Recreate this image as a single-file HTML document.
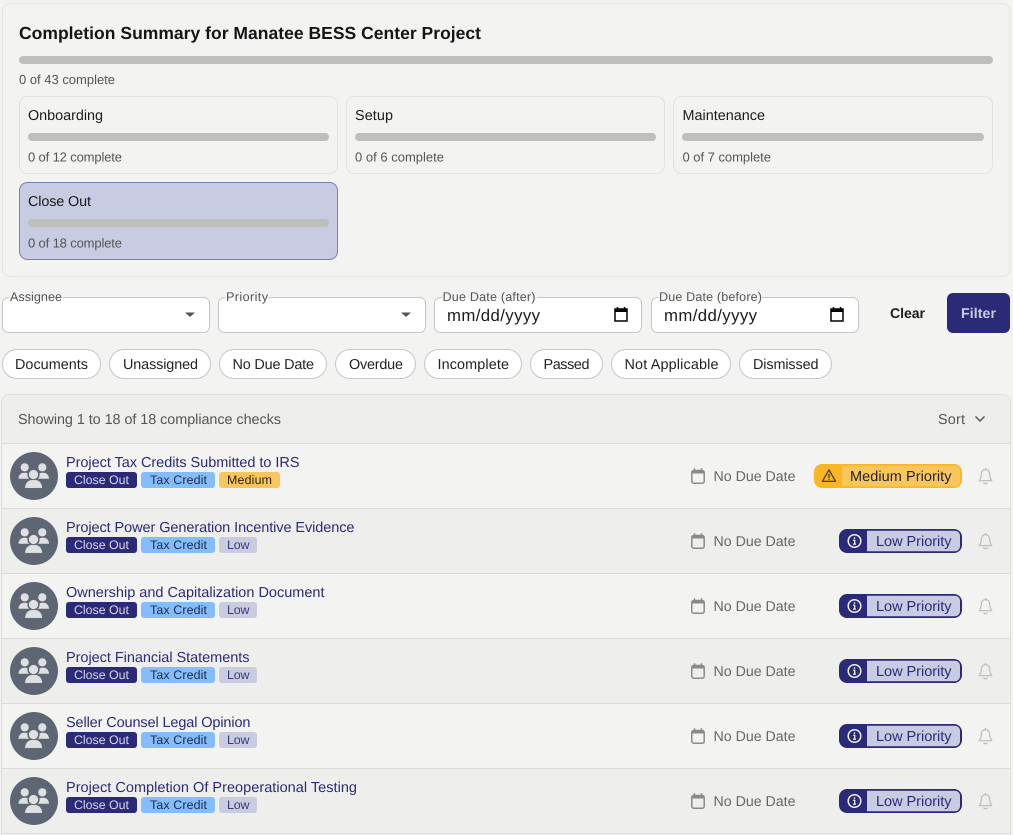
<!DOCTYPE html>
<html lang="en">
<head>
<meta charset="utf-8">
<title>Completion Summary</title>
<style>
html,body{margin:0;padding:0;background:#f3f3f2;width:1013px;height:835px;overflow:hidden}
svg{display:block}
text{font-family:"Liberation Sans",sans-serif;font-size:14.4px;text-rendering:geometricPrecision}
.title{font-size:17.5px;font-weight:700;fill:#151515}
.btn{font-size:14.1px;font-weight:700}
.sub{font-size:13px;fill:#555}
.card{font-size:14.4px;fill:#1a1a1a}
.lab{font-size:12.6px;fill:#555}
.date{font-size:16.8px;fill:#1a1a1a}
.chip{font-size:14.4px;fill:#222}
.t{font-size:14.5px;fill:#2b2a77}
.tag{font-size:12.4px}
.due{font-size:14.2px;fill:#666}
.pri{font-size:14.5px}
</style>
</head>
<body>
<svg width="1013" height="835" viewBox="0 0 1013 835" xmlns="http://www.w3.org/2000/svg">
<defs>
<symbol id="av" width="48" height="48" viewBox="0 0 48 48">
<circle cx="24" cy="24" r="24" fill="#5f6673"/>
<circle cx="14.700" cy="15.300" r="4.100" fill="#dfe0e2"/>
<circle cx="32.300" cy="15.300" r="4.100" fill="#dfe0e2"/>
<path d="M8.500 26.800c0-3.700 2.600-6.100 5.500-6.100h1.500c2.900 0 5 2.400 5 6.100z" fill="#dfe0e2"/>
<path d="M39 26.800c0-3.700-2.600-6.100-5.500-6.100H32c-2.900 0-5 2.400-5 6.100z" fill="#dfe0e2"/>
<circle cx="23.500" cy="22.500" r="5.400" fill="#dfe0e2" stroke="#5f6673" stroke-width="1.500"/>
<path d="M14.800 36.200c0-4.900 3.500-8.400 7-8.400h3.600c3.500 0 7 3.500 7 8.400z" fill="#dfe0e2" stroke="#5f6673" stroke-width="0.500"/>
</symbol>
<symbol id="cal" width="14" height="16" viewBox="0 0 14 16">
<path d="M3.500 0.300v2.700M10.500 0.300v2.700" stroke="#8a8a8a" stroke-width="1.500" fill="none"/>
<rect x="0.800" y="2.500" width="12.400" height="12.700" rx="2" fill="none" stroke="#8a8a8a" stroke-width="1.500"/>
<path d="M1 5.500V3.500a1 1 0 0 1 1-1h10a1 1 0 0 1 1 1v2z" fill="#8a8a8a"/>
</symbol>
<symbol id="bell" width="14" height="17" viewBox="0 0 14 17">
<path d="M7 1.600C4 1.600 2.800 3.900 2.800 6.500c0 2.900-.9 4.500-2.100 6.100h12.600c-1.200-1.600-2.100-3.200-2.100-6.100 0-2.600-1.200-4.900-4.200-4.900z" fill="none" stroke="#c0c0c0" stroke-width="1.300" stroke-linejoin="round"/>
<path d="M7 .5v1.200M5.300 15c.5.900 3 .9 3.400 0" fill="none" stroke="#c0c0c0" stroke-width="1.300" stroke-linecap="round"/>
</symbol>
<symbol id="dcal" width="14" height="15" viewBox="0 0 14 15">
<path d="M3.500 0v2.500M10.500 0v2.500" stroke="#000" stroke-width="1.500"/>
<rect x="1" y="2" width="12" height="12" fill="none" stroke="#000" stroke-width="1.500"/>
<rect x="1" y="2" width="12" height="3" fill="#000"/>
</symbol>
</defs>

<rect width="1013" height="835" fill="#f3f3f2"/>

<!-- Summary panel -->
<rect x="2.500" y="3.500" width="1007.500" height="273" rx="8" fill="#f3f3f2" stroke="#e3e3e6"/>
<text x="19" y="39" class="title" textLength="462">Completion Summary for Manatee BESS Center Project</text>
<rect x="19" y="56" width="974" height="8" rx="4" fill="#bebebc"/>
<text x="19" y="84" class="sub" textLength="96">0 of 43 complete</text>

<rect x="19.500" y="96.500" width="318" height="77" rx="8" fill="#f3f3f2" stroke="#e3e3e6"/>
<text x="28" y="120" class="card" textLength="75">Onboarding</text>
<rect x="28" y="133" width="301" height="8" rx="4" fill="#bebebc"/>
<text x="28" y="161.500" class="sub" textLength="94">0 of 12 complete</text>

<rect x="346.500" y="96.500" width="318" height="77" rx="8" fill="#f3f3f2" stroke="#e3e3e6"/>
<text x="355" y="120" class="card" textLength="38">Setup</text>
<rect x="355" y="133" width="301" height="8" rx="4" fill="#bebebc"/>
<text x="355" y="161.500" class="sub" textLength="89">0 of 6 complete</text>

<rect x="673.500" y="96.500" width="319" height="77" rx="8" fill="#f3f3f2" stroke="#e3e3e6"/>
<text x="682.500" y="120" class="card" textLength="82.500">Maintenance</text>
<rect x="682" y="133" width="302" height="8" rx="4" fill="#bebebc"/>
<text x="682.500" y="161.500" class="sub" textLength="88.500">0 of 7 complete</text>

<rect x="19.500" y="182.500" width="318" height="77" rx="8" fill="#c9cbe3" stroke="#7c7eb8"/>
<text x="28" y="206" class="card" textLength="63">Close Out</text>
<rect x="28" y="219" width="301" height="8" rx="4" fill="#bebebc"/>
<text x="28" y="247.500" class="sub" textLength="94">0 of 18 complete</text>

<!-- Filters -->
<g fill="#fff" stroke="#c6c6c6">
<rect x="2.500" y="297.500" width="207" height="35" rx="6"/>
<rect x="218.500" y="297.500" width="207" height="35" rx="6"/>
<rect x="434.500" y="297.500" width="207" height="35" rx="6"/>
<rect x="651.500" y="297.500" width="207" height="35" rx="6"/>
</g>
<g fill="#f3f3f2">
<rect x="9" y="296" width="54" height="3"/>
<rect x="225" y="296" width="44" height="3"/>
<rect x="442" y="296" width="95" height="3"/>
<rect x="658" y="296" width="104" height="3"/>
</g>
<text x="10" y="301" class="lab" textLength="52">Assignee</text>
<text x="226" y="301" class="lab" textLength="42">Priority</text>
<text x="442.500" y="301" class="lab" textLength="93">Due Date (after)</text>
<text x="659" y="301" class="lab" textLength="103">Due Date (before)</text>
<path d="M185 312.500h10l-5 4.500z" fill="#555"/>
<path d="M401 312.500h10l-5 4.500z" fill="#555"/>
<text x="447" y="321" class="date" textLength="93">mm/dd/yyyy</text>
<text x="664" y="321" class="date" textLength="93">mm/dd/yyyy</text>
<use href="#dcal" x="614" y="307"/>
<use href="#dcal" x="830" y="307"/>
<text x="890" y="318" class="btn" fill="#1e1e1e" textLength="35">Clear</text>
<rect x="947" y="293" width="63" height="40" rx="6" fill="#2b2a77"/>
<text x="961" y="318" class="btn" fill="#c9cbe3" textLength="35">Filter</text>

<!-- Chips -->
<g fill="#fff" stroke="#c6c6c6">
<rect x="2.500" y="349.500" width="98" height="29" rx="14.500"/>
<rect x="109.500" y="349.500" width="101" height="29" rx="14.500"/>
<rect x="219.500" y="349.500" width="107" height="29" rx="14.500"/>
<rect x="335.500" y="349.500" width="80" height="29" rx="14.500"/>
<rect x="424.500" y="349.500" width="97" height="29" rx="14.500"/>
<rect x="530.500" y="349.500" width="72" height="29" rx="14.500"/>
<rect x="611.500" y="349.500" width="119" height="29" rx="14.500"/>
<rect x="739.500" y="349.500" width="92" height="29" rx="14.500"/>
</g>
<text x="15" y="369" class="chip" textLength="73">Documents</text>
<text x="123" y="369" class="chip" textLength="75">Unassigned</text>
<text x="232.500" y="369" class="chip" textLength="81.500">No Due Date</text>
<text x="349" y="369" class="chip" textLength="54">Overdue</text>
<text x="437.500" y="369" class="chip" textLength="71.500">Incomplete</text>
<text x="543.500" y="369" class="chip" textLength="46">Passed</text>
<text x="624.500" y="369" class="chip" textLength="94">Not Applicable</text>
<text x="753" y="369" class="chip" textLength="65.500">Dismissed</text>

<!-- List -->
<path d="M1.500 836V402.500a8 8 0 0 1 8-8H1002.500a8 8 0 0 1 8 8V836" fill="#f3f3f2" stroke="#dedede"/>
<path d="M2 443V402.500a7.500 7.500 0 0 1 7.500-7.500H1002.500a7.500 7.500 0 0 1 7.500 7.500V443z" fill="#eeeeed"/>
<rect x="2" y="443" width="1008" height="1" fill="#dcdcdb"/>
<text x="18" y="424" fill="#555" textLength="263">Showing 1 to 18 of 18 compliance checks</text>
<text x="938" y="424" fill="#555" textLength="27">Sort</text>
<path d="M975.500 416.500l4.500 4.500 4.500-4.500" fill="none" stroke="#555" stroke-width="1.500"/>

<!-- Row 1 -->
<g>
<rect x="2" y="444" width="1008" height="64" fill="#f3f3f2"/>
<rect x="2" y="508" width="1008" height="1" fill="#dcdcdb"/>
<use href="#av" x="10" y="452"/>
<text x="66" y="467" class="t" textLength="233.500">Project Tax Credits Submitted to IRS</text>
<rect x="66" y="472" width="71" height="16" rx="3" fill="#2b2a77"/>
<text x="74" y="484" class="tag" fill="#d6d7ec" textLength="55">Close Out</text>
<rect x="141" y="472" width="74" height="16" rx="3" fill="#85bdfc"/>
<text x="150" y="484" class="tag" fill="#1e2a4a" textLength="57">Tax Credit</text>
<rect x="219" y="472" width="61" height="16" rx="3" fill="#f9c65c"/>
<text x="227" y="484" class="tag" fill="#2a2410" textLength="45">Medium</text>
<use href="#cal" x="691" y="468"/>
<text x="713.500" y="481" class="due" textLength="82">No Due Date</text>
<rect x="814" y="464" width="148" height="24" rx="8" fill="#fcb525"/>
<path d="M842 465.800H955a5 5 0 0 1 5 5v10.400a5 5 0 0 1-5 5H842z" fill="#f9c65c"/>
<path d="M829 469.800l6.600 11.600h-13.200z" fill="none" stroke="#4a3a10" stroke-width="1.300" stroke-linejoin="round"/>
<path d="M829 473.800v4.200M829 478.900v1.200" stroke="#4a3a10" stroke-width="1.300"/>
<text x="850" y="481" class="pri" fill="#1f1f1f" textLength="101.500">Medium Priority</text>
<use href="#bell" x="978.500" y="468"/>
</g>

<!-- Row 2 -->
<g transform="translate(0 65)">
<rect x="2" y="444" width="1008" height="64" fill="#eeeeed"/>
<rect x="2" y="508" width="1008" height="1" fill="#dcdcdb"/>
<use href="#av" x="10" y="452"/>
<text x="66" y="467" class="t" textLength="288.500">Project Power Generation Incentive Evidence</text>
<rect x="66" y="472" width="71" height="16" rx="3" fill="#2b2a77"/>
<text x="74" y="484" class="tag" fill="#d6d7ec" textLength="55">Close Out</text>
<rect x="141" y="472" width="74" height="16" rx="3" fill="#85bdfc"/>
<text x="150" y="484" class="tag" fill="#1e2a4a" textLength="57">Tax Credit</text>
<rect x="219" y="472" width="38" height="16" rx="3" fill="#c9cbdf"/>
<text x="227" y="484" class="tag" fill="#3a3a78" textLength="22.500">Low</text>
<use href="#cal" x="691" y="468"/>
<text x="713.500" y="481" class="due" textLength="82">No Due Date</text>
<rect x="839" y="464" width="123" height="24" rx="8" fill="#2b2a77"/>
<path d="M867 465.800H955a5 5 0 0 1 5 5v10.400a5 5 0 0 1-5 5H867z" fill="#c9cbe3"/>
<circle cx="854.500" cy="476" r="6.300" fill="none" stroke="#eeeef8" stroke-width="1.500"/>
<path d="M854.500 472.300v1.600M853.200 475.300h1.500v3.600M853 479.100h3" stroke="#eeeef8" stroke-width="1.300" fill="none"/>
<text x="876" y="481" class="pri" fill="#2b2a77" textLength="75.500">Low Priority</text>
<use href="#bell" x="978.500" y="468"/>
</g>

<!-- Row 3 -->
<g transform="translate(0 130)">
<rect x="2" y="444" width="1008" height="64" fill="#f3f3f2"/>
<rect x="2" y="508" width="1008" height="1" fill="#dcdcdb"/>
<use href="#av" x="10" y="452"/>
<text x="66" y="467" class="t" textLength="258.500">Ownership and Capitalization Document</text>
<rect x="66" y="472" width="71" height="16" rx="3" fill="#2b2a77"/>
<text x="74" y="484" class="tag" fill="#d6d7ec" textLength="55">Close Out</text>
<rect x="141" y="472" width="74" height="16" rx="3" fill="#85bdfc"/>
<text x="150" y="484" class="tag" fill="#1e2a4a" textLength="57">Tax Credit</text>
<rect x="219" y="472" width="38" height="16" rx="3" fill="#c9cbdf"/>
<text x="227" y="484" class="tag" fill="#3a3a78" textLength="22.500">Low</text>
<use href="#cal" x="691" y="468"/>
<text x="713.500" y="481" class="due" textLength="82">No Due Date</text>
<rect x="839" y="464" width="123" height="24" rx="8" fill="#2b2a77"/>
<path d="M867 465.800H955a5 5 0 0 1 5 5v10.400a5 5 0 0 1-5 5H867z" fill="#c9cbe3"/>
<circle cx="854.500" cy="476" r="6.300" fill="none" stroke="#eeeef8" stroke-width="1.500"/>
<path d="M854.500 472.300v1.600M853.200 475.300h1.500v3.600M853 479.100h3" stroke="#eeeef8" stroke-width="1.300" fill="none"/>
<text x="876" y="481" class="pri" fill="#2b2a77" textLength="75.500">Low Priority</text>
<use href="#bell" x="978.500" y="468"/>
</g>

<!-- Row 4 -->
<g transform="translate(0 195)">
<rect x="2" y="444" width="1008" height="64" fill="#eeeeed"/>
<rect x="2" y="508" width="1008" height="1" fill="#dcdcdb"/>
<use href="#av" x="10" y="452"/>
<text x="66" y="467" class="t" textLength="183.500">Project Financial Statements</text>
<rect x="66" y="472" width="71" height="16" rx="3" fill="#2b2a77"/>
<text x="74" y="484" class="tag" fill="#d6d7ec" textLength="55">Close Out</text>
<rect x="141" y="472" width="74" height="16" rx="3" fill="#85bdfc"/>
<text x="150" y="484" class="tag" fill="#1e2a4a" textLength="57">Tax Credit</text>
<rect x="219" y="472" width="38" height="16" rx="3" fill="#c9cbdf"/>
<text x="227" y="484" class="tag" fill="#3a3a78" textLength="22.500">Low</text>
<use href="#cal" x="691" y="468"/>
<text x="713.500" y="481" class="due" textLength="82">No Due Date</text>
<rect x="839" y="464" width="123" height="24" rx="8" fill="#2b2a77"/>
<path d="M867 465.800H955a5 5 0 0 1 5 5v10.400a5 5 0 0 1-5 5H867z" fill="#c9cbe3"/>
<circle cx="854.500" cy="476" r="6.300" fill="none" stroke="#eeeef8" stroke-width="1.500"/>
<path d="M854.500 472.300v1.600M853.200 475.300h1.500v3.600M853 479.100h3" stroke="#eeeef8" stroke-width="1.300" fill="none"/>
<text x="876" y="481" class="pri" fill="#2b2a77" textLength="75.500">Low Priority</text>
<use href="#bell" x="978.500" y="468"/>
</g>

<!-- Row 5 -->
<g transform="translate(0 260)">
<rect x="2" y="444" width="1008" height="64" fill="#f3f3f2"/>
<rect x="2" y="508" width="1008" height="1" fill="#dcdcdb"/>
<use href="#av" x="10" y="452"/>
<text x="66" y="467" class="t" textLength="184.500">Seller Counsel Legal Opinion</text>
<rect x="66" y="472" width="71" height="16" rx="3" fill="#2b2a77"/>
<text x="74" y="484" class="tag" fill="#d6d7ec" textLength="55">Close Out</text>
<rect x="141" y="472" width="74" height="16" rx="3" fill="#85bdfc"/>
<text x="150" y="484" class="tag" fill="#1e2a4a" textLength="57">Tax Credit</text>
<rect x="219" y="472" width="38" height="16" rx="3" fill="#c9cbdf"/>
<text x="227" y="484" class="tag" fill="#3a3a78" textLength="22.500">Low</text>
<use href="#cal" x="691" y="468"/>
<text x="713.500" y="481" class="due" textLength="82">No Due Date</text>
<rect x="839" y="464" width="123" height="24" rx="8" fill="#2b2a77"/>
<path d="M867 465.800H955a5 5 0 0 1 5 5v10.400a5 5 0 0 1-5 5H867z" fill="#c9cbe3"/>
<circle cx="854.500" cy="476" r="6.300" fill="none" stroke="#eeeef8" stroke-width="1.500"/>
<path d="M854.500 472.300v1.600M853.200 475.300h1.500v3.600M853 479.100h3" stroke="#eeeef8" stroke-width="1.300" fill="none"/>
<text x="876" y="481" class="pri" fill="#2b2a77" textLength="75.500">Low Priority</text>
<use href="#bell" x="978.500" y="468"/>
</g>

<!-- Row 6 -->
<g transform="translate(0 325)">
<rect x="2" y="444" width="1008" height="64" fill="#eeeeed"/>
<rect x="2" y="508" width="1008" height="1" fill="#dcdcdb"/>
<use href="#av" x="10" y="452"/>
<text x="66" y="467" class="t" textLength="291">Project Completion Of Preoperational Testing</text>
<rect x="66" y="472" width="71" height="16" rx="3" fill="#2b2a77"/>
<text x="74" y="484" class="tag" fill="#d6d7ec" textLength="55">Close Out</text>
<rect x="141" y="472" width="74" height="16" rx="3" fill="#85bdfc"/>
<text x="150" y="484" class="tag" fill="#1e2a4a" textLength="57">Tax Credit</text>
<rect x="219" y="472" width="38" height="16" rx="3" fill="#c9cbdf"/>
<text x="227" y="484" class="tag" fill="#3a3a78" textLength="22.500">Low</text>
<use href="#cal" x="691" y="468"/>
<text x="713.500" y="481" class="due" textLength="82">No Due Date</text>
<rect x="839" y="464" width="123" height="24" rx="8" fill="#2b2a77"/>
<path d="M867 465.800H955a5 5 0 0 1 5 5v10.400a5 5 0 0 1-5 5H867z" fill="#c9cbe3"/>
<circle cx="854.500" cy="476" r="6.300" fill="none" stroke="#eeeef8" stroke-width="1.500"/>
<path d="M854.500 472.300v1.600M853.200 475.300h1.500v3.600M853 479.100h3" stroke="#eeeef8" stroke-width="1.300" fill="none"/>
<text x="876" y="481" class="pri" fill="#2b2a77" textLength="75.500">Low Priority</text>
<use href="#bell" x="978.500" y="468"/>
</g>
</svg>
</body>
</html>
